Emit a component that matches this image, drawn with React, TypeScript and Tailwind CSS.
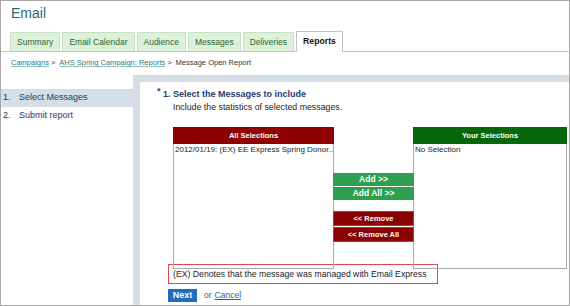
const tabs = ['Summary', 'Email Calendar', 'Audience', 'Messages', 'Deliveries'];

function ListBox({ title, headerClass, width, item }: { title: string; headerClass: string; width: string; item: string }) {
    return (
        <div className={`flex flex-col ${width}`}>
            {/* Header */}
            <div className={`h-[17px] flex items-center justify-center text-white font-bold text-[7.5px] leading-[17px] ${headerClass}`}>
                {title}
            </div>
            {/* Items */}
            <div className="flex-1 border-x border-b border-[#a9a9a9] pl-px text-[8px] leading-[11px] text-[#222] whitespace-nowrap overflow-hidden">
                {item}
            </div>
        </div>
    );
}

export default function App() {
    return (
        <div className="w-[570px] h-[306px] flex flex-col bg-white border border-[#a8a8a8] overflow-hidden font-['Liberation_Sans',Arial,sans-serif]">
            {/* Title */}
            <div className="pt-[4px] pl-[10px] text-[14px] leading-[16px] text-[#1f6a6c]">Email</div>

            {/* Tabs */}
            <div className="mt-[10px] flex items-end gap-[2px] pl-[9px] border-b border-[#c4c4c4]">
                {tabs.map((t) => (
                    <div
                        key={t}
                        className="h-[19px] flex items-center pt-px px-[6px] bg-[#ddf0d9] border border-b-0 border-[#c7dfc3] text-[8.5px] text-[#2a6a2e]"
                    >
                        {t}
                    </div>
                ))}
                <div className="h-[21px] -mb-px flex items-center px-[6px] bg-white border border-b-0 border-[#c4c4c4] text-[8.7px] font-bold text-[#111]">
                    Reports
                </div>
            </div>

            {/* Breadcrumb */}
            <div className="pl-[10px] pt-[5px] pb-[6px] text-[7.5px] leading-[12px] text-[#333] flex">
                <span className="text-[#2b7a7c] underline decoration-[#8fb9ba]">Campaigns</span>
                <span className="ml-[2px] mr-[4px]">&gt;</span>
                <span className="text-[#2b7a7c] underline decoration-[#8fb9ba]">AHS Spring Campaign: Reports</span>
                <span className="ml-[2px] mr-[4px]">&gt;</span>
                <span>Message Open Report</span>
            </div>

            {/* Body */}
            <div className="flex flex-1 min-h-0">
                {/* Steps */}
                <div className="w-[132px] bg-white pt-[14px] text-[9px] text-[#1f3a72]">
                    <div className="h-[18px] flex items-center pl-[2px] bg-[#d5dee6]">
                        <span className="w-[16px] text-[#333]">1.</span>
                        <span>Select Messages</span>
                    </div>
                    <div className="h-[18px] flex items-center pl-[2px]">
                        <span className="w-[16px] text-[#333]">2.</span>
                        <span>Submit report</span>
                    </div>
                </div>

                <div className="flex-1 flex bg-[#d5dee6] pl-[7px] pt-[7px]">
                    <div className="flex-1 bg-white pt-[5px] pl-[17px]">
                        {/* Heading */}
                        <div className="flex text-[9px] leading-[14px] font-bold text-[#1f3a72]">
                            <span className="w-[6px] text-[#1d46c8] text-[9px] leading-[9px]">*</span>
                            <span>1. Select the Messages to include</span>
                        </div>
                        <div className="pl-[16px] text-[8.8px] leading-[12px] text-[#222]">
                            Include the statistics of selected messages.
                        </div>

                        {/* Selection table */}
                        <div className="mt-[14px] ml-[16px] flex h-[142px]">
                            <ListBox
                                title="All Selections"
                                headerClass="bg-[#8f0000]"
                                width="w-[161px]"
                                item="2012/01/19: (EX) EE Express Spring Donor..."
                            />
                            <div className="w-[79px] flex flex-col pt-[46px]">
                                <button className="relative -mx-px h-[13px] bg-[#2e9e4f] text-white font-bold text-[8.5px] leading-[13px]">
                                    Add &gt;&gt;
                                </button>
                                <button className="relative -mx-px mt-px h-[13px] bg-[#2e9e4f] text-white font-bold text-[8.5px] leading-[13px]">
                                    Add All &gt;&gt;
                                </button>
                                <button className="relative -mx-px mt-[11px] h-[15px] bg-[#8b0000] border border-[#5e5e5e] text-white font-bold text-[7.5px] leading-[13px]">
                                    &lt;&lt; Remove
                                </button>
                                <button className="relative -mx-px mt-px h-[15px] bg-[#8b0000] border border-[#5e5e5e] text-white font-bold text-[7.5px] leading-[13px]">
                                    &lt;&lt; Remove All
                                </button>
                            </div>
                            <ListBox title="Your Selections" headerClass="bg-[#07670b]" width="w-[154px]" item="No Selection" />
                        </div>

                        {/* Note */}
                        <div className="-mt-[5px] ml-[11px] w-[270px] h-[20px] border border-[#e0474c] pl-[4px] text-[8.7px] leading-[18px] text-[#222]">
                            (EX) Denotes that the message was managed with Email Express
                        </div>

                        {/* Actions */}
                        <div className="mt-[5px] ml-[11px] flex items-center text-[8.5px]">
                            <button className="w-[29px] h-[13px] bg-[#1e6ec0] text-white font-bold text-[9px] leading-[13px]">
                                Next
                            </button>
                            <span className="ml-[7px] text-[#555]">or</span>
                            <span className="ml-[3px] text-[#1f5fae] underline">Cancel</span>
                        </div>
                    </div>
                </div>
            </div>
        </div>
    );
}
